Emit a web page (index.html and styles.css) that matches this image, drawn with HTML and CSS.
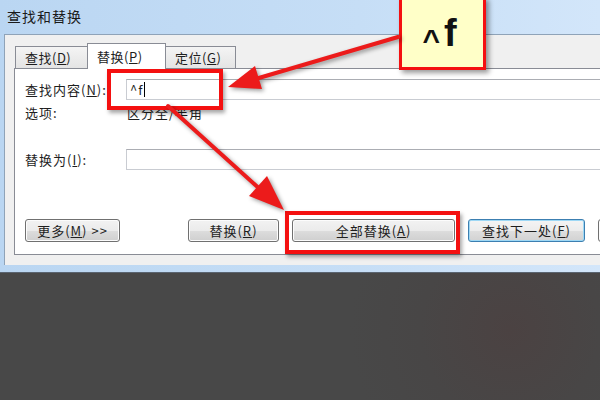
FILE: index.html
```html
<!DOCTYPE html>
<html lang="zh">
<head>
<meta charset="utf-8">
<link rel="stylesheet" href="styles.css">
</head>
<body>
<div class="stage">
  <div class="window">
    <div class="titlebar">查找和替换</div>
    <div class="client">
      <div class="tabs">
        <div class="tab">查找(<u>D</u>)</div>
        <div class="tab active">替换(<u>P</u>)</div>
        <div class="tab">定位(<u>G</u>)</div>
      </div>
      <div class="panel">
        <div class="row">
          <div class="label">查找内容(<u>N</u>):</div>
          <div class="input"><span class="val">^f</span><span class="caret"></span></div>
        </div>
        <div class="row opts">
          <div class="label">选项:</div>
          <div class="optval">区分全/半角</div>
        </div>
        <div class="row repl">
          <div class="label">替换为(<u>I</u>):</div>
          <div class="input"></div>
        </div>
        <div class="buttons">
          <div class="btn more">更多(<u>M</u>) &gt;&gt;</div>
          <div class="btn replace">替换(<u>R</u>)</div>
          <div class="btn all">全部替换(<u>A</u>)</div>
          <div class="btn next focus">查找下一处(<u>F</u>)</div>
          <div class="btn cut"></div>
        </div>
      </div>
    </div>
  </div>

  <div class="hl hl-input"></div>
  <div class="hl hl-all"></div>
  <div class="callout"><span class="hat">^</span>f</div>

  <svg class="arrows" width="600" height="400" viewBox="0 0 600 400">
    <g class="arrow">
      <line x1="398" y1="37" x2="252" y2="80" />
      <polygon points="228,87 262,89 255,66" />
      <line x1="168" y1="106" x2="262" y2="191" />
      <polygon points="284,210 249,196 267,176" />
    </g>
  </svg>
</div>
</body>
</html>
```

FILE: styles.css
```css
* { box-sizing: border-box; }
html, body { margin: 0; padding: 0; }
body {
  width: 600px;
  height: 400px;
  overflow: hidden;
  background: radial-gradient(circle at 510px 330px, #4b4242 0, #484646 90px, #484848 160px);
  font-family: "Noto Sans CJK SC", "Noto Sans", sans-serif;
  color: #1e1e1e;
}
.stage { position: relative; width: 600px; height: 400px; overflow: hidden; }

.window {
  width: 600px;
  overflow: hidden;
  background: linear-gradient(to right, #bad6f2, #c6def6 60%, #d3e6fa);
  padding: 0 0 7px 4px;
  border-bottom: 1px solid #5a6470;
}
.titlebar {
  height: 34px;
  line-height: 32px;
  padding-left: 3px;
  font-size: 14px;
  letter-spacing: 1px;
  color: #1a1a1a;
}
.client {
  height: 231px;
  margin-right: -20px;
  background: #f0f0f0;
  border-top: 1px solid #8fa3b8;
  border-left: 1px solid #8fa3b8;
  padding-top: 8px;
}
.tabs {
  display: flex;
  align-items: flex-end;
  margin-left: 10px;
  height: 25px;
  position: relative;
  z-index: 2;
}
.tab {
  height: 22px;
  padding: 0 9px;
  font-size: 13px;
  line-height: 21px;
  letter-spacing: 0.5px;
  border: 1px solid #898c95;
  border-bottom: none;
  background: linear-gradient(#f4f4f4, #e4e4e4);
  margin-left: -1px;
}
.tab:first-child { width: 73px; margin-left: 0; }
.tab.active {
  width: 79px;
  height: 26px;
  margin-bottom: -1px;
  background: #fff;
  line-height: 25px;
  padding-left: 9px;
}
.tab:last-child { width: 71px; }
u { text-decoration: underline; text-underline-offset: 1px; }

.panel {
  margin-left: 9px;
  height: 187px;
  background: #fff;
  border: 1px solid #898c95;
  padding: 10px 0 0 10px;
  font-size: 13px;
  letter-spacing: 1px;
  overflow: hidden;
}
.row { display: flex; align-items: center; height: 21px; }
.label { width: 101px; flex: none; }
.input {
  flex: 1;
  height: 21px;
  border: 1px solid #c9ccd2;
  border-top-color: #abadb3;
  background: #fff;
  display: flex;
  align-items: center;
  padding-left: 3px;
  font-size: 13px;
}
.val { letter-spacing: 1px; }
.caret { width: 1px; height: 15px; background: #000; margin-left: 1px; }
.opts { margin-top: 5px; height: 15px; }
.optval { padding-left: 1px; }
.repl { margin-top: 29px; }

.buttons {
  display: flex;
  gap: 13px;
  margin-top: 49px;
  white-space: nowrap;
}
.btn {
  height: 23px;
  flex: none;
  border: 1px solid #707070;
  border-radius: 3px;
  background: linear-gradient(#f2f2f2 0, #ebebeb 50%, #dddddd 51%, #cfcfcf 100%);
  font-size: 13px;
  line-height: 21px;
  text-align: center;
  letter-spacing: 1px;
  box-shadow: inset 0 0 0 1px #fcfcfc;
}
.more { width: 95px; }
.replace { width: 91px; margin-left: 55px; }
.all { width: 163px; }
.next { width: 117px; }
.focus {
  border-color: #3c7fb1;
  box-shadow: inset 0 0 0 1px #9ed8f5;
  background: linear-gradient(#f4f4f4 0, #ececec 50%, #dfdfdf 51%, #d2d2d2 100%);
}
.cut { width: 80px; }

.hl {
  position: absolute;
  border: 4px solid #f41010;
  box-shadow: 2px 3px 4px rgba(0,0,0,0.35);
}
.hl-input { left: 107px; top: 69px; width: 116px; height: 41px; }
.hl-all { left: 285px; top: 211px; width: 175px; height: 43px; }

.callout {
  position: absolute;
  left: 399px;
  top: -3px;
  width: 87px;
  height: 73px;
  background: #ffffc8;
  border: 3px solid #f41010;
  box-shadow: 3px 3px 5px rgba(0,0,0,0.4);
  font-family: "Liberation Sans", Arial, sans-serif;
  font-weight: bold;
  font-size: 38px;
  line-height: 66px;
  text-align: center;
  color: #111;
  padding-right: 6px;
}
.hat { font-size: 30px; position: relative; top: 4px; margin-right: 4px; }

.arrows { position: absolute; left: 0; top: 0; }
.arrow { filter: drop-shadow(2px 2px 2px rgba(0,0,0,0.4)); }
.arrow line { stroke: #ec1b1b; stroke-width: 4; stroke-linecap: round; }
.arrow polygon { fill: #ec1b1b; }
```
